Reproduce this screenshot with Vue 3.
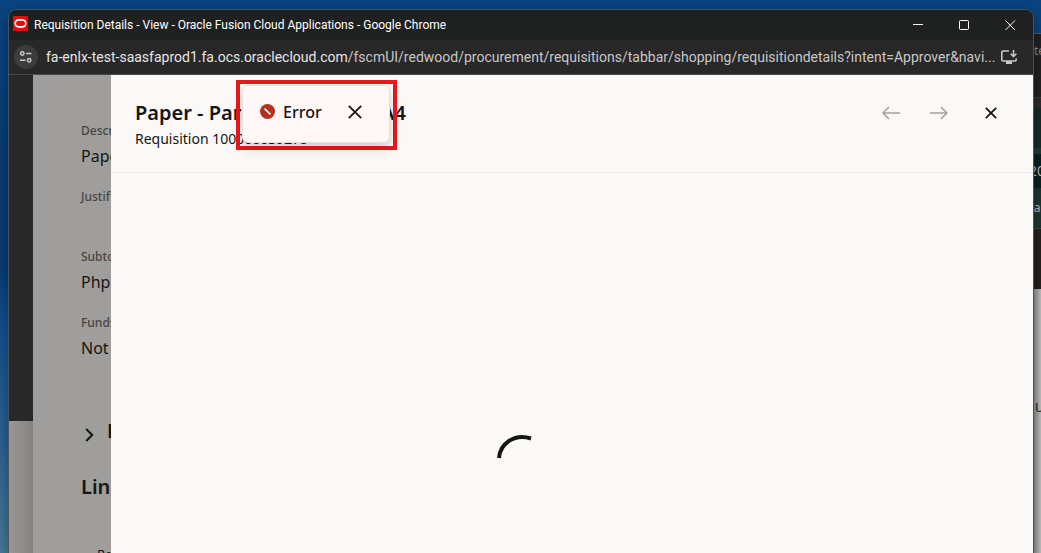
<script setup>
const fields = [
  { label: 'Description', value: 'Paper' },
  { label: 'Justification', value: '' },
  { label: 'Subtotal', value: 'Php 0' },
  { label: 'Funds status', value: 'Not reserved' },
]
</script>

<template>
  <div class="desktop">
    <div class="back-window" aria-hidden="true">
      <div class="back-bar"><span>te</span></div>
      <div class="back-tabs"></div>
      <div class="back-row back-row-dark"><span>20</span></div>
      <div class="back-row back-row-green"><span>aa</span></div>
      <div class="back-space"></div>
      <div class="back-body"><span>ou</span></div>
    </div>

    <div class="window">
      <header class="titlebar">
        <svg class="favicon" width="15" height="15" viewBox="0 0 15 15">
          <rect width="15" height="15" fill="#e80a0a" />
          <rect x="2.2" y="3.8" width="10.6" height="7" rx="3.5" fill="none" stroke="#fff" stroke-width="1.7" />
        </svg>
        <span class="window-title">Requisition Details - View - Oracle Fusion Cloud Applications - Google Chrome</span>
        <div class="window-buttons">
          <button aria-label="Minimize">
            <svg width="11" height="11" viewBox="0 0 11 11"><path d="M0 4.500h10" /></svg>
          </button>
          <button aria-label="Maximize">
            <svg width="11" height="11" viewBox="0 0 11 11"><rect x=".5" y=".5" width="9" height="9" rx="1" /></svg>
          </button>
          <button aria-label="Close window">
            <svg width="11" height="11" viewBox="0 0 11 11"><path d="M.5.5l9.500 9.500M10 .5l-9.500 9.500" /></svg>
          </button>
        </div>
      </header>

      <div class="addressbar">
        <button class="site-info" aria-label="View site information">
          <svg width="14" height="14" viewBox="0 0 14 14">
            <circle cx="3.3" cy="3.5" r="1.7" />
            <path d="M7 3.5h5.5M1 10.2h5.5" />
            <circle cx="10.2" cy="10.2" r="1.7" />
          </svg>
        </button>
        <span class="url"><b>fa-enlx-test-saasfaprod1.fa.ocs.oraclecloud.com</b>/fscmUI/redwood/procurement/requisitions/tabbar/shopping/requisitiondetails?intent=Approver&amp;navi...</span>
        <button class="install" aria-label="Install app">
          <svg width="16" height="15" viewBox="0 0 16 15">
            <path d="M8 1H2Q.8 1 .8 2.2v7.6Q.8 11 2 11h12q1.2 0 1.2-1.2V8.500" />
            <path d="M12.500 0v6M9.700 3.800l2.800 2.800 2.800-2.800" />
            <path class="solid" d="M5 11h6v3H5z" />
          </svg>
        </button>
      </div>

      <main class="page">
        <aside class="underlay">
          <div class="rail"></div>
          <div class="sheet">
            <dl>
              <div v-for="f in fields" :key="f.label" class="field" :class="{ empty: !f.value }">
                <dt>{{ f.label }}</dt>
                <dd>{{ f.value }}</dd>
              </div>
            </dl>
            <div class="section">
              <svg width="9" height="14" viewBox="0 0 9 14"><path d="M1.200 1l6 6-6 6" /></svg>
              <h3>Lines</h3>
            </div>
            <h3 class="lines">Lines</h3>
            <p class="column">Requisition</p>
          </div>
        </aside>

        <section class="drawer">
          <header class="drawer-head">
            <div>
              <h2>Paper - Parchment - Size: A4</h2>
              <p>Requisition 100000039275</p>
            </div>
            <nav>
              <button class="muted" aria-label="Previous">
                <svg width="18" height="14" viewBox="0 0 18 14"><path d="M7 1L1 7l6 6M1 7h17" /></svg>
              </button>
              <button class="muted" aria-label="Next">
                <svg width="18" height="14" viewBox="0 0 18 14"><path d="M11 1l6 6-6 6M17 7H0" /></svg>
              </button>
              <button aria-label="Close drawer">
                <svg width="12" height="12" viewBox="0 0 12 12"><path d="M.8.8l10.400 10.400M11.200.8L.8 11.200" /></svg>
              </button>
            </nav>
          </header>
          <div class="drawer-body">
            <svg width="36" height="36" viewBox="0 0 36 36" role="img" aria-label="Loading">
              <path d="M2 24C3 10 17 -1 34 4.500" />
            </svg>
          </div>
        </section>

        <div class="highlight">
          <div class="toast" role="alert">
            <svg class="error-icon" width="15" height="15" viewBox="0 0 15 15">
              <circle cx="7.500" cy="7.500" r="7.500" fill="#b3311f" />
              <path d="M4.600 4.600l5.800 5.800" stroke="#fff" stroke-width="1.500" />
            </svg>
            <span>Error</span>
            <button aria-label="Dismiss">
              <svg width="14" height="14" viewBox="0 0 14 14"><path d="M.8.8l12.400 12.400M13.200.8L.8 13.200" /></svg>
            </button>
          </div>
        </div>
      </main>
    </div>
  </div>
</template>

<style>
body {
  margin: 0;
}
</style>

<style scoped>
.desktop {
  position: relative;
  display: flex;
  height: 100vh;
  box-sizing: border-box;
  padding: 9px 7px 0 8px;
  overflow: hidden;
  background: linear-gradient(180deg, #0a4480 0, #083b74 28%, #083b74 48%, #14508c 60%, #2a6190 80%, #467894 100%);
  font-family: "Noto Sans", "Open Sans", sans-serif;
}

button {
  display: flex;
  align-items: center;
  justify-content: center;
  margin: 0;
  padding: 0;
  border: 0;
  background: none;
  color: inherit;
}

svg {
  display: block;
  flex: none;
}

button svg {
  fill: none;
  stroke: currentColor;
}

h2,
h3,
p,
dl,
dd {
  margin: 0;
}

.back-window {
  position: absolute;
  top: 33px;
  right: 0;
  bottom: 0;
  width: 60px;
  display: flex;
  flex-direction: column;
  border-top: 1px solid #52575b;
  background: #23211f;
  color: #b9b9b9;
  font-size: 14px;
  line-height: 18px;
}

.back-window span {
  display: block;
  margin-left: 53px;
  white-space: nowrap;
}

.back-bar {
  height: 64px;
  padding-top: 8px;
  box-sizing: border-box;
  border-bottom: 1px solid #3a3a3a;
  background: #212121;
  color: #858585;
  font-size: 12px;
}

.back-tabs {
  height: 56px;
  box-sizing: border-box;
  border-top: 10px solid #2b2b2b;
  border-bottom: 6px solid #1c3a37;
  background: #162a28;
}

.back-row {
  box-sizing: border-box;
}

.back-row-dark {
  height: 34px;
  padding-top: 8px;
  background: #082120;
}

.back-row-dark span {
  margin-left: 48px;
}

.back-row-green {
  height: 41px;
  padding-top: 11px;
  border-bottom: 1px solid #3b4846;
  background: #1e3431;
  font-size: 12px;
}

.back-row-green span {
  margin-left: 46px;
}

.back-space {
  height: 60px;
}

.back-body {
  flex: 1;
  padding-top: 108px;
  background: linear-gradient(90deg, #888 52px, #bebebe 60px);
  color: #333;
  font-size: 16px;
}

.back-body span {
  margin-left: 44px;
}

.window {
  position: relative;
  flex: 1;
  min-width: 0;
  display: flex;
  flex-direction: column;
  overflow: hidden;
  border: 1px solid #47545f;
  border-bottom: 0;
  border-radius: 9px 9px 0 0;
  background: #282828;
  box-shadow: 0 4px 12px rgba(0, 0, 0, 0.35);
}

.titlebar {
  height: 30px;
  flex: none;
  display: flex;
  align-items: center;
  padding-left: 4px;
  background: #1f2120;
  color: #fff;
}

.favicon {
  margin-bottom: 4px;
}

.window-title {
  flex: 1;
  margin-left: 6px;
  overflow: hidden;
  white-space: nowrap;
  font-family: Roboto, "Open Sans", sans-serif;
  font-size: 12px;
  line-height: 20px;
}

.window-buttons {
  display: flex;
}

.window-buttons button {
  width: 46px;
  height: 30px;
}

.addressbar {
  height: 35px;
  flex: none;
  box-sizing: border-box;
  display: flex;
  align-items: center;
  padding: 0 16px 0 5px;
  border-bottom: 1px solid #484848;
  background: #282828;
  color: #c7c7c7;
}

.site-info {
  width: 24px;
  height: 24px;
  flex: none;
  border-radius: 50%;
  background: #3c3c3c;
}

.site-info svg {
  stroke-width: 1.5;
}

.url {
  flex: 1;
  margin-left: 8px;
  overflow: hidden;
  white-space: nowrap;
  font-family: Roboto, "Open Sans", sans-serif;
  font-size: 14px;
  line-height: 22px;
}

.url b {
  color: #e6e6e6;
  font-weight: 400;
}

.install svg {
  stroke-width: 1.6;
}

.install .solid {
  fill: currentColor;
  stroke: none;
}

.page {
  position: relative;
  flex: 1;
  min-height: 0;
  display: flex;
}

.underlay {
  width: 102px;
  flex: none;
  display: flex;
  overflow: hidden;
  background: #9f9e9c;
  color: #161513;
}

.rail {
  width: 24px;
  flex: none;
  background: linear-gradient(#282828 346px, transparent 346px), linear-gradient(90deg, #9a9694, #868481);
}

.sheet {
  flex: 1;
  min-width: 0;
  padding: 46px 0 0 48px;
  white-space: nowrap;
  overflow: hidden;
}

.field {
  height: 66px;
}

.field.empty {
  height: 60px;
}

dt {
  color: #474542;
  font-size: 12px;
  font-weight: 500;
  line-height: 20px;
}

dd {
  margin-top: 3px;
  font-size: 16px;
  line-height: 24px;
}

.section {
  display: flex;
  align-items: center;
  gap: 13px;
  margin-top: 38px;
  padding-left: 4px;
}

.section svg {
  margin-top: 8px;
  fill: none;
  stroke: currentColor;
  stroke-width: 2;
}

h3 {
  font-size: 20px;
  font-weight: 600;
  line-height: 28px;
}

.lines {
  margin-top: 28px;
}

.column {
  margin-top: 43px;
  padding-left: 16px;
  font-size: 13px;
  line-height: 20px;
}

.drawer {
  flex: 1;
  min-width: 0;
  display: flex;
  flex-direction: column;
  background: #faf9f7;
  color: #161513;
}

.drawer-head {
  height: 98px;
  flex: none;
  box-sizing: border-box;
  display: flex;
  justify-content: space-between;
  padding: 24px 36px 0 24px;
  border-bottom: 1px solid #efeeec;
}

h2 {
  font-size: 20px;
  font-weight: 600;
  line-height: 28px;
}

.drawer-head p {
  margin-top: 2px;
  font-size: 14px;
  line-height: 20px;
}

nav {
  height: 28px;
  display: flex;
  align-items: center;
  gap: 30px;
}

nav svg {
  stroke-width: 1.8;
}

nav button:last-child {
  margin-left: 7px;
}

.muted {
  color: #a3a19f;
}

.muted svg {
  stroke-width: 1.5;
}

.drawer-body {
  flex: 1;
  display: flex;
  justify-content: center;
  padding: 261px 114px 0 0;
}

.drawer-body svg {
  fill: none;
  stroke: #161513;
  stroke-width: 4;
}

.highlight {
  position: absolute;
  top: 5px;
  left: 227px;
  border: 4px solid #e8191c;
  padding: 1px 3px 3px 2px;
}

.toast {
  display: flex;
  align-items: center;
  width: 148px;
  height: 58px;
  box-sizing: border-box;
  padding: 0 27px 5px 17px;
  border: 1px solid #e4dfdd;
  border-radius: 6px;
  background: #fff8f7;
  box-shadow: 0 6px 12px rgba(0, 0, 0, 0.16);
  color: #161513;
  font-size: 16px;
}

.toast span {
  flex: 1;
  margin-left: 8px;
  font-weight: 500;
}

.toast button svg {
  stroke-width: 1.8;
}
</style>
